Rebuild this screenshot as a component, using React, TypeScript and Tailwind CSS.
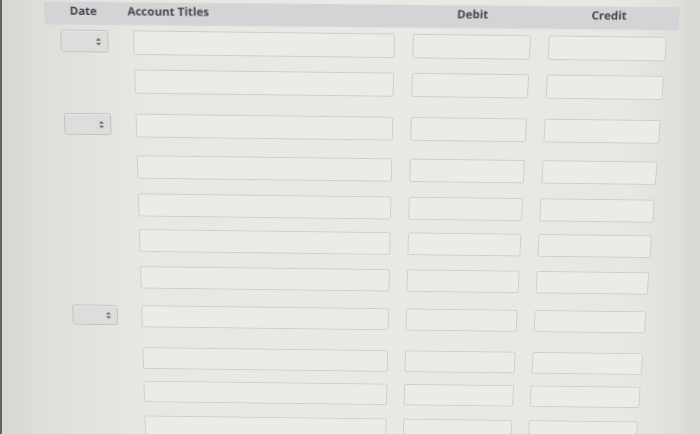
import React from "react";

type Row = { date: boolean; gap: string };

const rows: Row[] = [
  { date: true, gap: "mt-0" },
  { date: false, gap: "mt-[15px]" },
  { date: true, gap: "mt-[21px]" },
  { date: false, gap: "mt-[19px]" },
  { date: false, gap: "mt-[16px]" },
  { date: false, gap: "mt-[14px]" },
  { date: false, gap: "mt-[16px]" },
  { date: true, gap: "mt-[19px]" },
  { date: false, gap: "mt-[23px]" },
  { date: false, gap: "mt-[14px]" },
  { date: false, gap: "mt-[16px]" },
];

function Arrows() {
  return (
    <svg width="6" height="10" viewBox="0 0 6 10" className="block">
      <path d="M0.5 4 L3 1 L5.5 4 Z" fill="#6a6a6a" />
      <path d="M0.5 6 L3 9 L5.5 6 Z" fill="#6a6a6a" />
    </svg>
  );
}

function DateSelect() {
  return (
    <div className="w-[48px] h-[23px] rounded-[3px] border border-[#c2c2c1] bg-[#dddddc] flex items-center justify-end pr-[6px] shadow-[inset_0_1px_0_#eaeaea]">
      <Arrows />
    </div>
  );
}

function Field({ w }: { w: string }) {
  return <div className={`${w} h-[25px] rounded-[2px] border border-[#cecec9] bg-[#ecebe7]`} />;
}

export default function App() {
  return (
    <div
      className="w-[700px] h-[434px] overflow-hidden border-l-2 border-[#626262] bg-[linear-gradient(90deg,#d8d7d4_0%,#dfdedb_6%,#e8e7e3_20%,#eae9e5_55%,#e8e8e3_90%,#dededa_97%,#d8d9d2_100%)]"
      style={{ fontFamily: '"Open Sans", "Liberation Sans", sans-serif' }}
    >
      <div className="pt-[4px] origin-[345px_32px] [transform:perspective(900px)_rotate(0.7deg)_rotateX(-10deg)]">
        <div className="ml-[43px] w-[633px] h-[23px] bg-[#d3d4d6] flex items-center pb-[6px] -rotate-[0.2deg] text-[11.5px] font-bold text-[#43474c]">
          <span className="w-[78px] text-center">Date</span>
          <span className="w-[290px] pl-[5px]">Account Titles</span>
          <span className="w-[118px] text-center">Debit</span>
          <span className="ml-[18px] w-[118px] text-center">Credit</span>
        </div>
        <div className="mt-[6px] flex flex-col">
          {rows.map((r, i) => (
            <div key={i} className={`${r.gap} flex items-start pl-[58px]`}>
              {r.date ? <DateSelect /> : <div className="w-[48px] h-[23px]" />}
              <div className="ml-[25px]">
                <Field w="w-[262px]" />
              </div>
              <div className="ml-[18px]">
                <Field w="w-[118px]" />
              </div>
              <div className="ml-[18px]">
                <Field w="w-[118px]" />
              </div>
            </div>
          ))}
        </div>
      </div>
    </div>
  );
}
